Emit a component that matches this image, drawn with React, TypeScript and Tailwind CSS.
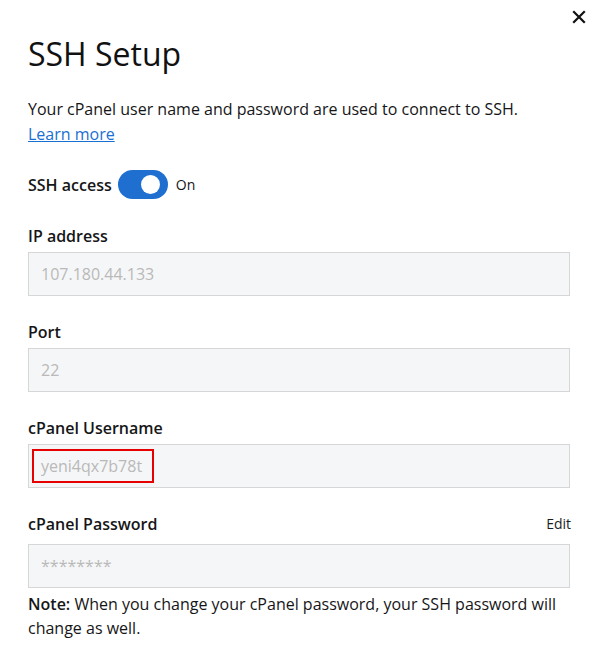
import React from "react";

function Field({ label, value, right, boxed, first }: { label: string; value: string; right?: string; boxed?: boolean; first?: boolean }) {
  return (
    <div className={first ? "mt-[25px]" : "mt-[24px]"}>
      <div className={`flex items-center justify-between ${right ? "mb-[8px]" : "mb-[4px]"}`}>
        <span className="text-[16px] leading-[24px] font-semibold">{label}</span>
        {right && <span className="text-[14px] leading-[24px] text-[#1d1d1f]">{right}</span>}
      </div>
      <div
        className={`h-[44px] w-[542px] bg-[#f5f6f7] border border-[#d6d6d6] flex items-center ${
          boxed ? "pl-[3px]" : "pl-[12px]"
        } text-[16px] text-[#b9b9b9]`}
      >
        {boxed ? (
          <span className="h-[34px] border-2 border-[#e60000] pl-[7px] pr-[10px] flex items-center">{value}</span>
        ) : (
          <span>{value}</span>
        )}
      </div>
    </div>
  );
}

export default function App() {
  return (
    <div className="relative w-[599px] h-[656px] bg-white text-[#161618] font-['Open_Sans',sans-serif]">
      <button className="absolute top-[10px] right-[13px] w-[14px] h-[14px]" aria-label="Close">
        <svg width="14" height="14" viewBox="0 0 14 14">
          <path d="M2 2 L12 12 M12 2 L2 12" stroke="#111" strokeWidth="2.2" strokeLinecap="square" />
        </svg>
      </button>
      <div className="px-[28px] pt-[34px]">
        <h1 className="text-[32px] leading-[40px] font-normal text-[#111]">SSH Setup</h1>
        <p className="mt-[23px] text-[16px] leading-[25px]">
          Your cPanel user name and password are used to connect to SSH.
          <br />
          <a href="#" className="text-[#1a6fd2] underline">
            Learn more
          </a>
        </p>
        <div className="mt-[23px] flex items-center h-[29px]">
          <span className="text-[16px] font-semibold leading-[24px]">SSH access</span>
          <div className="ml-[6px] w-[50px] h-[29px] rounded-full bg-[#1f6fd0] flex items-center justify-end pr-[8px]">
            <div className="w-[19px] h-[19px] rounded-full bg-white" />
          </div>
          <span className="ml-[8px] text-[14px] font-medium">On</span>
        </div>
        <Field label="IP address" value="107.180.44.133" first />
        <Field label="Port" value="22" />
        <Field label="cPanel Username" value="yeni4qx7b78t" boxed />
        <Field label="cPanel Password" value="********" right="Edit" />
        <p className="mt-[4px] text-[16px] leading-[24px]">
          <span className="font-semibold">Note:</span> When you change your cPanel password, your SSH password will
          change as well.
        </p>
      </div>
    </div>
  );
}
